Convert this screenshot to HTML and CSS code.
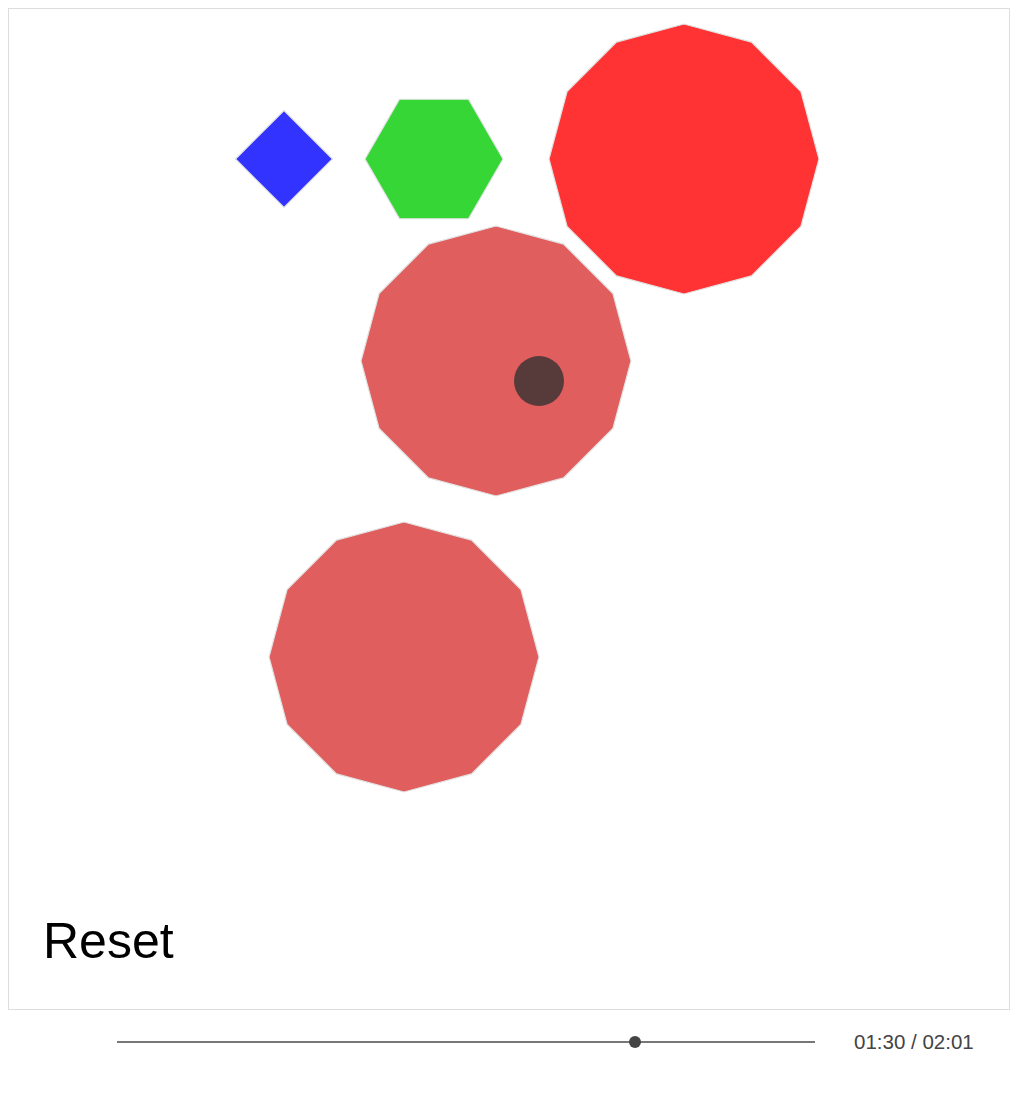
FILE: index.html
```html
<!DOCTYPE html>
<html>
<head>
<meta charset="utf-8">
<link rel="stylesheet" href="styles.css">
</head>
<body>
<div class="stage">
  <svg class="canvas" width="1000" height="1000" viewBox="0 0 1000 1000">
    <g class="shape">
      <polygon class="blue" transform="translate(275 150)" points="0,-48.5 48.5,0 0,48.5 -48.5,0"/>
      <polygon class="green" transform="translate(425 150)" points="69,0 34.5,59.76 -34.5,59.76 -69,0 -34.5,-59.76 34.5,-59.76"/>
      <polygon class="red" transform="translate(675 150)" points="0,-135 67.5,-116.91 116.91,-67.5 135,0 116.91,67.5 67.5,116.91 0,135 -67.5,116.91 -116.91,67.5 -135,0 -116.91,-67.5 -67.5,-116.91"/>
      <polygon class="pale" transform="translate(487 352)" points="0,-135 67.5,-116.91 116.91,-67.5 135,0 116.91,67.5 67.5,116.91 0,135 -67.5,116.91 -116.91,67.5 -135,0 -116.91,-67.5 -67.5,-116.91"/>
      <polygon class="pale" transform="translate(395 648)" points="0,-135 67.5,-116.91 116.91,-67.5 135,0 116.91,67.5 67.5,116.91 0,135 -67.5,116.91 -116.91,67.5 -135,0 -116.91,-67.5 -67.5,-116.91"/>
    </g>
    <circle class="dot" cx="530" cy="372" r="25"/>
    <text class="reset" x="34" y="949">Reset</text>
  </svg>
</div>
<div class="controls">
  <div class="track"><div class="thumb"></div></div>
  <div class="time">01:30 / 02:01</div>
</div>
</body>
</html>
```
FILE: styles.css
```css
html {
  background: #ffffff;
}
body {
  margin: 8px 0 8px 8px;
  padding: 0;
  font-family: "Liberation Sans", Arial, sans-serif;
}
.stage {
  box-sizing: border-box;
  width: 1002px;
  height: 1002px;
  border: 1px solid #dddddd;
}
.canvas {
  display: block;
}
.shape polygon {
  stroke: #e2e2e2;
  stroke-width: 1.2;
}
.blue { fill: #3333ff; }
.green { fill: #36d636; }
.red { fill: #ff3333; }
.pale { fill: #e05e5e; }
.dot { fill: #573a3a; }
.reset {
  font-family: "Liberation Sans", Arial, sans-serif;
  font-size: 50px;
  fill: #000000;
}
.controls {
  display: flex;
  align-items: center;
  height: 63px;
  padding-left: 109px;
}
.track {
  position: relative;
  width: 698px;
  height: 2px;
  background: #777777;
}
.thumb {
  position: absolute;
  left: 512px;
  top: -5px;
  width: 12px;
  height: 12px;
  border-radius: 50%;
  background: #444444;
}
.time {
  margin-left: 39px;
  font-size: 20.5px;
  color: #444444;
}
```
